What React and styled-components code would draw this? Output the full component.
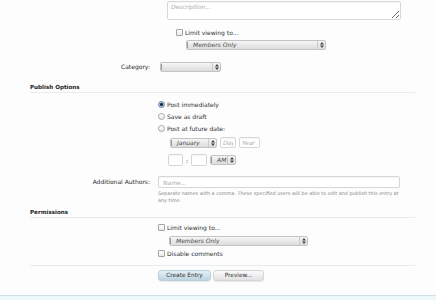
import React from "react";
import styled, { createGlobalStyle } from "styled-components";

const Global = createGlobalStyle`
  html, body { margin: 0; padding: 0; background: #fdfdfe; }
  body {
    font-family: "DejaVu Sans", Verdana, sans-serif;
    font-size: 6px;
    color: #2e2e2e;
    width: 436px;
    height: 300px;
    overflow: hidden;
  }
  * { box-sizing: border-box; }
`;

const Page = styled.div`
  display: flex;
  flex-direction: column;
  height: 300px;
`;

const Main = styled.div`
  flex: 1;
  padding: 0 21px 0 30px;
  display: flex;
  flex-direction: column;
`;

const Footer = styled.div`
  height: 5px;
  border-top: 1px solid #cfe2e7;
  background: #eef7f9;
`;

const Block = styled.div`
  display: flex;
  flex-direction: column;
  align-items: flex-start;
  margin-left: ${(p) => p.$indent || 0}px;
  margin-top: ${(p) => p.$mt || 0}px;
`;

const TextArea = styled.textarea`
  width: ${(p) => p.$w}px;
  height: 19px;
  margin: 1px 0 0 0;
  padding: 1px 3px;
  border: 1px solid #d8d8d8;
  border-radius: 2px;
  background: #fff;
  font-family: inherit;
  font-size: 6px;
  line-height: 8px;
  resize: vertical;
  box-shadow: inset 0 1px 1px rgba(0, 0, 0, 0.04);
  &::placeholder { color: #a8a8a8; font-style: italic; }
`;

const OptionRow = styled.label`
  display: flex;
  align-items: center;
  height: 12px;
  gap: 2px;
  margin-top: ${(p) => p.$mt || 0}px;
  margin-left: ${(p) => p.$indent || 0}px;
  color: #2e2e2e;
  white-space: nowrap;
`;

const Check = styled.span`
  width: 7px;
  height: 7px;
  border: 1px solid #a4a4a4;
  border-radius: 1px;
  background: linear-gradient(#ffffff, #e9e9e9);
  flex: none;
`;

const Radio = styled.span`
  width: 7px;
  height: 7px;
  border-radius: 50%;
  border: 1px solid ${(p) => (p.$on ? "#6d86a8" : "#a4a4a4")};
  background: ${(p) =>
    p.$on
      ? "radial-gradient(circle, #1d2a3a 0 1.3px, #9fb8d8 1.6px, #c9d9ee 100%)"
      : "linear-gradient(#ffffff, #e8e8e8)"};
  flex: none;
`;

const SelectBox = styled.div`
  display: flex;
  align-items: stretch;
  width: ${(p) => p.$w}px;
  height: 10px;
  margin-top: ${(p) => p.$mt || 0}px;
  margin-left: ${(p) => p.$indent || 0}px;
  border: 1px solid #c4c4c4;
  border-radius: 2px;
  background: linear-gradient(#f6f6f6, #dcdcdc);
  font-style: italic;
  color: #4a4a4a;
  flex: none;
`;

const SelectText = styled.span`
  flex: 1;
  display: flex;
  align-items: center;
  padding-left: 5px;
  border-left: 1px solid #9a9a9a;
  margin: 1px 0;
  line-height: 8px;
  overflow: hidden;
`;

const SelectArrow = styled.span`
  width: 8px;
  display: flex;
  align-items: center;
  justify-content: center;
  border-left: 1px solid #cacaca;
`;

const Arrows = () => (
  <svg width="4" height="6" viewBox="0 0 4 6">
    <path d="M2 0 L4 2.4 H0 Z M2 6 L4 3.6 H0 Z" fill="#444" />
  </svg>
);

const Select = ({ w, mt, indent, children }) => (
  <SelectBox $w={w} $mt={mt} $indent={indent}>
    <SelectText>{children}</SelectText>
    <SelectArrow>
      <Arrows />
    </SelectArrow>
  </SelectBox>
);

const FieldRow = styled.div`
  display: grid;
  grid-template-columns: 120px 1fr;
  column-gap: ${(p) => p.$gap || 8}px;
  align-items: start;
  margin-top: ${(p) => p.$mt || 0}px;
`;

const Label = styled.div`
  text-align: right;
  line-height: 12px;
  height: ${(p) => p.$h || 12}px;
  display: flex;
  align-items: center;
  justify-content: flex-end;
  color: #2a2a2a;
`;

const SectionTitle = styled.div`
  font-weight: bold;
  font-size: 5.6px;
  line-height: 8px;
  padding-bottom: 1px;
  border-bottom: 1px solid #e6edf1;
  margin-top: ${(p) => p.$mt || 0}px;
  color: #222;
`;

const Divider = styled.div`
  border-top: 1px solid #e6edf1;
  margin-top: ${(p) => p.$mt || 0}px;
`;

const Inline = styled.div`
  display: flex;
  align-items: center;
  gap: ${(p) => p.$gap || 3}px;
  margin-top: ${(p) => p.$mt || 0}px;
  margin-left: ${(p) => p.$indent || 0}px;
`;

const TextInput = styled.input`
  width: ${(p) => p.$w}px;
  height: ${(p) => p.$h || 12}px;
  margin: 0;
  padding: 0 ${(p) => p.$pad ?? 2}px;
  border: 1px solid #d6d6d6;
  border-radius: 2px;
  background: #fff;
  font-family: inherit;
  font-size: 6px;
  color: #333;
  box-shadow: inset 0 1px 1px rgba(0, 0, 0, 0.04);
  &::placeholder { color: #a8a8a8; font-style: italic; }
`;

const Colon = styled.span`
  color: #333;
`;

const Help = styled.div`
  width: ${(p) => p.$w}px;
  font-size: 4.9px;
  line-height: 7px;
  color: #8a8a8a;
  margin-top: 2px;
`;

const Buttons = styled.div`
  display: flex;
  gap: 2px;
  margin-top: 4px;
`;

const Button = styled.button`
  width: ${(p) => p.$w}px;
  height: 11px;
  padding: 0;
  border: 1px solid ${(p) => (p.$primary ? "#b8cfdc" : "#d4d4d4")};
  border-radius: 3px;
  background: ${(p) =>
    p.$primary
      ? "linear-gradient(#e6f0f6, #bdd4e2)"
      : "linear-gradient(#fbfbfb, #e1e1e1)"};
  box-shadow: 0 1px 1px rgba(0, 0, 0, 0.08);
  font-family: inherit;
  font-size: 5.8px;
  color: #2e2e2e;
  line-height: 9px;
`;

export default function App() {
  return (
    <Page>
      <Global />
      <Main>
        <Block $indent={137}>
          <TextArea $w={234} placeholder="Description..." />
          <OptionRow $mt={6} $indent={9}>
            <Check />
            Limit viewing to...
          </OptionRow>
          <Select w={140} mt={2} indent={19}>Members Only</Select>
        </Block>

        <FieldRow $mt={12} $gap={10}>
          <Label $h={10}>Category:</Label>
          <Select w={61}> </Select>
        </FieldRow>

        <SectionTitle $mt={11}>Publish Options</SectionTitle>

        <FieldRow $mt={5}>
          <div />
          <Block>
            <OptionRow>
              <Radio $on />
              Post immediately
            </OptionRow>
            <OptionRow>
              <Radio />
              Save as draft
            </OptionRow>
            <OptionRow>
              <Radio />
              Post at future date:
            </OptionRow>
            <Inline $mt={3} $indent={12} $gap={3}>
              <Select w={47}>January</Select>
              <TextInput $w={16} $h={11} placeholder="Day" />
              <TextInput $w={21} $h={11} placeholder="Year" />
            </Inline>
            <Inline $mt={6} $indent={10} $gap={3}>
              <TextInput $w={15} />
              <Colon>:</Colon>
              <TextInput $w={16} />
              <Select w={26}>AM</Select>
            </Inline>
          </Block>
        </FieldRow>

        <FieldRow $mt={10}>
          <Label>Additional Authors:</Label>
          <Block>
            <TextInput $w={242} $pad={4} placeholder="Name..." />
            <Help $w={242}>
              Separate names with a comma. These specified users will be able to
              edit and publish this entry at any time.
            </Help>
          </Block>
        </FieldRow>

        <SectionTitle $mt={4}>Permissions</SectionTitle>

        <FieldRow $mt={3}>
          <div />
          <Block>
            <OptionRow>
              <Check />
              Limit viewing to...
            </OptionRow>
            <Select w={139} mt={3} indent={11}>Members Only</Select>
            <OptionRow $mt={1}>
              <Check />
              Disable comments
            </OptionRow>
          </Block>
        </FieldRow>

        <Divider $mt={6} />

        <FieldRow>
          <div />
          <Buttons>
            <Button $primary $w={53}>Create Entry</Button>
            <Button $w={51}>Preview...</Button>
          </Buttons>
        </FieldRow>
      </Main>
      <Footer />
    </Page>
  );
}
